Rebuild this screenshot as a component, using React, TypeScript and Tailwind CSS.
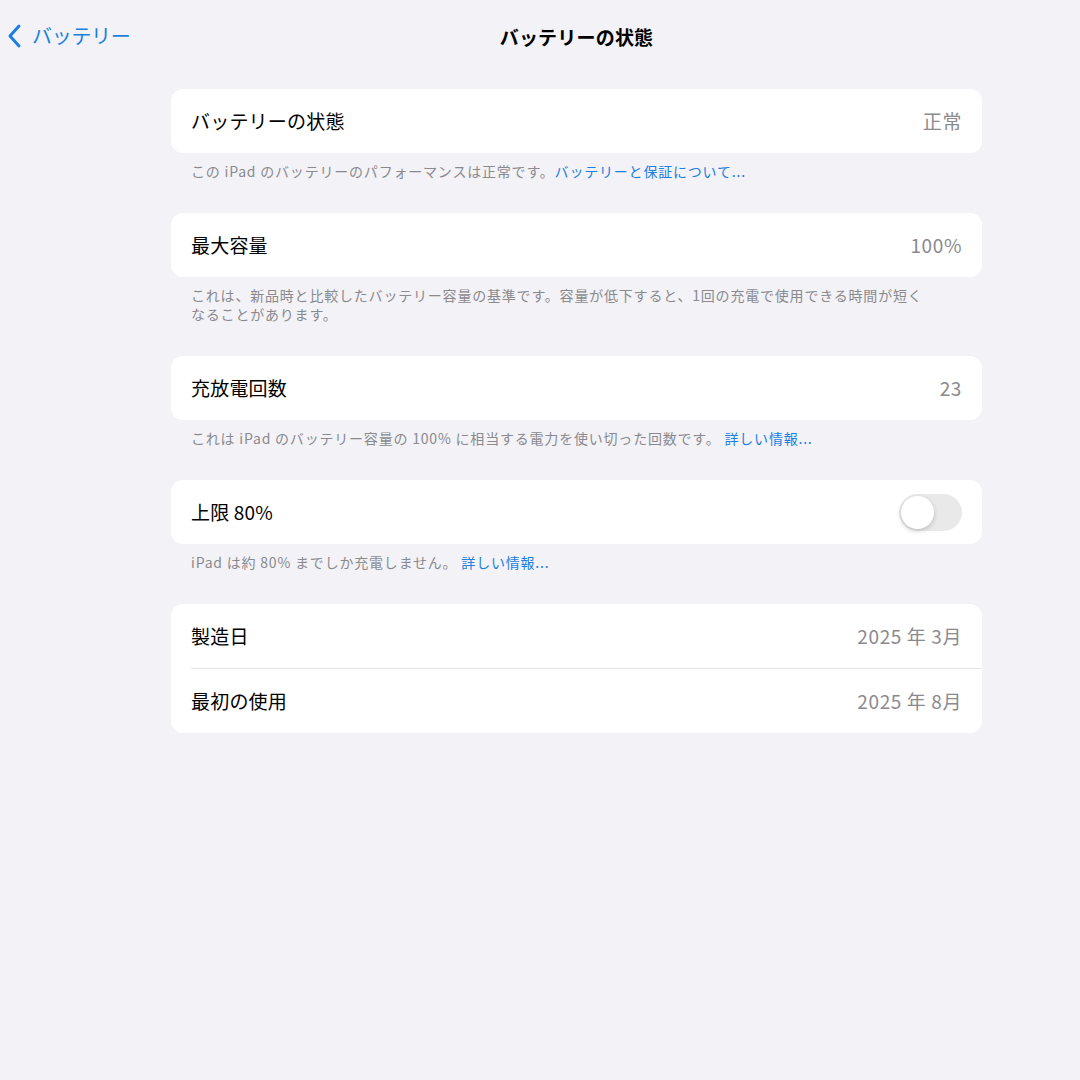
import React, { useState } from "react";

const font = { fontFamily: '"Noto Sans CJK JP", "Noto Sans", sans-serif' };

type RowProps = { label: string; value?: string; children?: React.ReactNode };

const Row = ({ label, value, children }: RowProps) => (
  <div className="flex items-center justify-between h-16 px-5">
    <span className="text-[19px] text-black tracking-[0.2px]">{label}</span>
    {value !== undefined ? (
      <span className="text-[19px] text-[#8a8a8e] tracking-[0.6px]">{value}</span>
    ) : (
      children
    )}
  </div>
);

const Footer = ({ children }: { children: React.ReactNode }) => (
  <p className="px-5 pt-[9px] mb-8 text-[14px] leading-[19px] tracking-[0.8px] text-[#8a8a8e]">{children}</p>
);

const Link = ({ children }: { children: React.ReactNode }) => (
  <span className="text-[#1a7fe0]">{children}</span>
);

const Toggle = () => {
  const [on, setOn] = useState(false);
  return (
    <button
      onClick={() => setOn(!on)}
      className={`relative w-[63px] h-[37px] rounded-full ${on ? "bg-[#34c759]" : "bg-[#e9e9ea]"}`}
    >
      <span
        className={`absolute top-[2px] ${on ? "left-[28px]" : "left-[2px]"} w-[33px] h-[33px] rounded-full bg-white shadow-[0_2px_5px_rgba(0,0,0,0.18)]`}
      />
    </button>
  );
};

export default function App() {
  return (
    <div className="w-[1080px] h-[1080px] bg-[#f2f2f7]" style={font}>
      <div className="relative h-[74px] flex items-center">
        <button className="absolute left-[7px] top-[22px] flex items-center gap-[9px] text-[#1a7fe0]">
          <svg width="16" height="26" viewBox="0 0 16 26" fill="none">
            <path d="M12 3 L3 13 L12 23" stroke="#1a7fe0" strokeWidth="3" strokeLinecap="round" strokeLinejoin="round" />
          </svg>
          <span className="text-[20px] leading-[28px] tracking-[-0.3px]">バッテリー</span>
        </button>
        <div className="ml-[171px] w-[811px] text-center text-[19px] font-bold text-black tracking-[0.2px]">
          バッテリーの状態
        </div>
      </div>

      <div className="ml-[171px] w-[811px] mt-[15px]">
        <div className="bg-white rounded-xl">
          <Row label="バッテリーの状態" value="正常" />
        </div>
        <Footer>
          この iPad のバッテリーのパフォーマンスは正常です。<Link>バッテリーと保証について...</Link>
        </Footer>

        <div className="bg-white rounded-xl">
          <Row label="最大容量" value="100%" />
        </div>
        <Footer>
          これは、新品時と比較したバッテリー容量の基準です。容量が低下すると、1回の充電で使用できる時間が短く
          <br />
          なることがあります。
        </Footer>

        <div className="bg-white rounded-xl">
          <Row label="充放電回数" value="23" />
        </div>
        <Footer>
          これは iPad のバッテリー容量の 100% に相当する電力を使い切った回数です。 <Link>詳しい情報...</Link>
        </Footer>

        <div className="bg-white rounded-xl">
          <Row label="上限 80%">
            <Toggle />
          </Row>
        </div>
        <Footer>
          iPad は約 80% までしか充電しません。 <Link>詳しい情報...</Link>
        </Footer>

        <div className="bg-white rounded-xl">
          <Row label="製造日" value="2025 年 3月" />
          <div className="ml-5 h-px bg-[#e5e5ea]" />
          <Row label="最初の使用" value="2025 年 8月" />
        </div>
      </div>
    </div>
  );
}
